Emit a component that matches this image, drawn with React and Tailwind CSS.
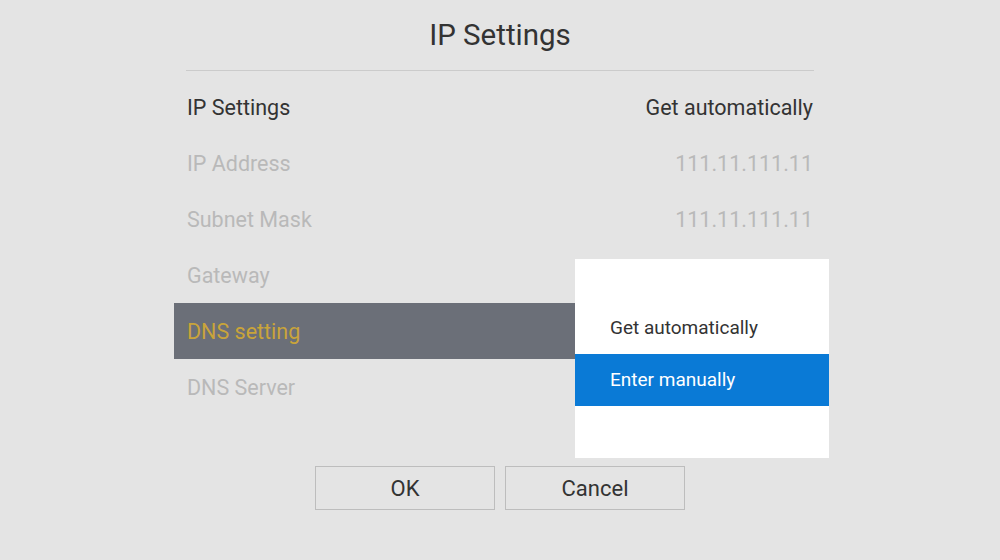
const rows = [
  { label: "IP Settings", value: "Get automatically", active: true },
  { label: "IP Address", value: "111.11.111.11" },
  { label: "Subnet Mask", value: "111.11.111.11" },
  { label: "Gateway", value: "" },
  { label: "DNS setting", value: "", focused: true },
  { label: "DNS Server", value: "" },
];

export default function App() {
  return (
    <div
      className="h-[560px] w-[1000px] bg-[#e4e4e4] text-[#333]"
      style={{ fontFamily: "Roboto, 'Noto Sans', sans-serif" }}
    >
      <div className="relative mx-auto w-[652px]">
        <div className="mx-[12px] flex h-[71px] items-center justify-center border-b border-[#cbcbcb] pt-[1px]">
          <h1 className="text-[29.5px] font-normal text-[#333]">IP Settings</h1>
        </div>

        <div className="mt-[8px]">
          {rows.map((row) => (
            <div
              key={row.label}
              className={`flex h-[56px] items-center justify-between px-[13px] pt-[3px] text-[21.5px] ${
                row.focused ? "bg-[#6b6f78] text-[#c9a43a]" : row.active ? "text-[#333]" : "text-[#b9b9b9]"
              }`}
            >
              <span>{row.label}</span>
              <span>{row.value}</span>
            </div>
          ))}
        </div>

        <div className="mt-[51px] flex justify-center gap-[10px]">
          <button className="h-[44px] w-[180px] border border-[#bdbdbd] text-[22px] text-[#333]">
            OK
          </button>
          <button className="h-[44px] w-[180px] border border-[#bdbdbd] text-[22px] text-[#333]">
            Cancel
          </button>
        </div>

        <div className="absolute left-[401px] top-[259px] h-[199px] w-[254px] bg-white pt-[43px] text-[19px]">
          <div className="flex h-[52px] items-center px-[35px] text-[#333]">Get automatically</div>
          <div className="flex h-[52px] items-center bg-[#0a7ad6] px-[35px] text-white">Enter manually</div>
        </div>
      </div>
    </div>
  );
}
